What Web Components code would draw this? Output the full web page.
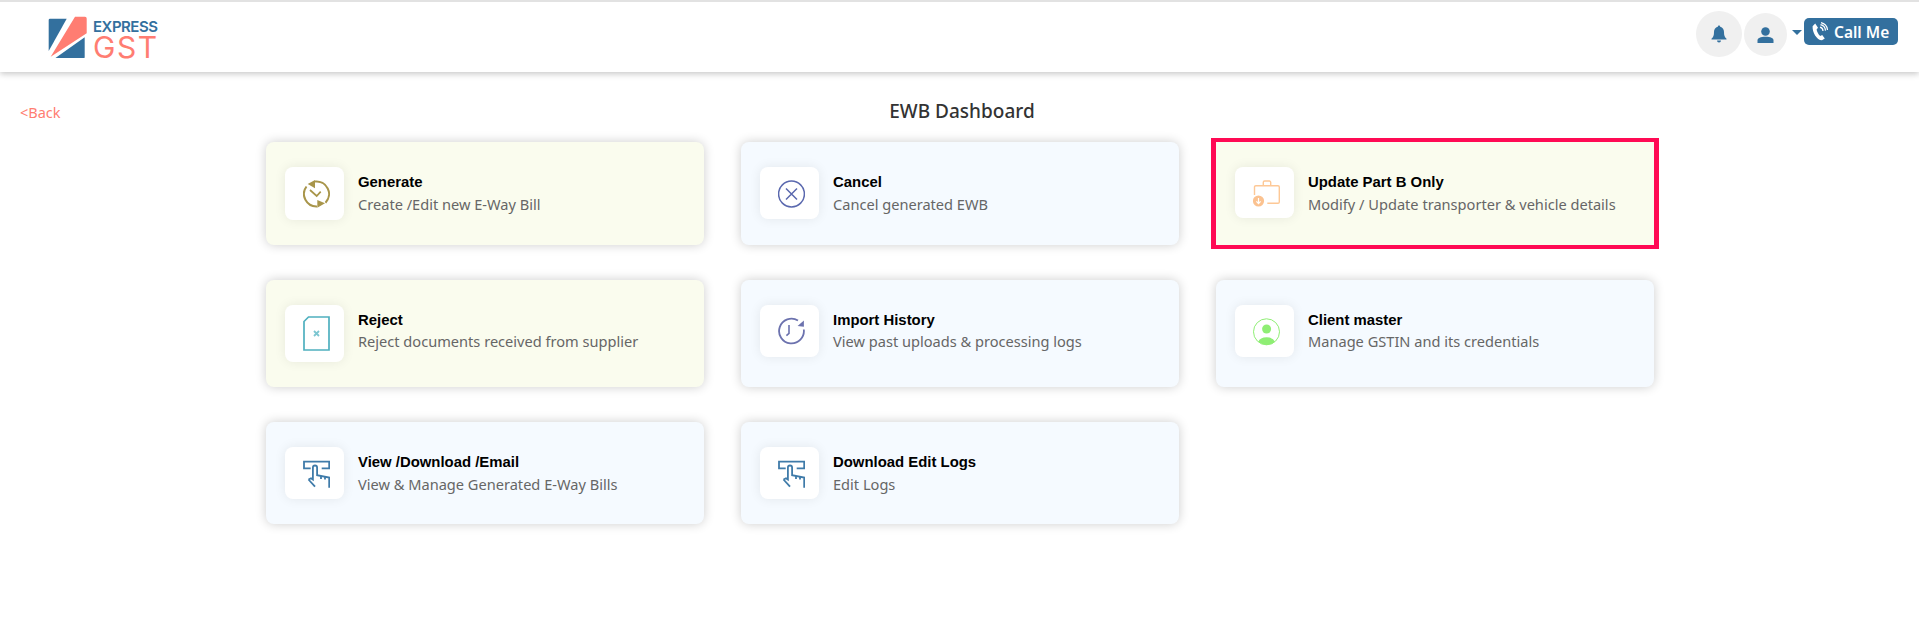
<!DOCTYPE html>
<html>
<head>
<meta charset="utf-8">
<title>EWB Dashboard</title>
<style>
    html, body { margin: 0; padding: 0; min-height: 634px; background: #fff; font-family: "Noto Sans", sans-serif; }
</style>
</head>
<body>
<app-header></app-header>
<ewb-dashboard>
    <span slot="heading">EWB Dashboard</span>

    <ewb-card tone="green">
        <svg slot="icon" width="27" height="31" viewBox="0 0 27 31" fill="none" stroke="#a8954a" stroke-width="2">
            <path d="M12 3.6A12.5 12.5 0 0 1 22.5 24.7"/>
            <path d="M3.5 8.5A12.5 12.5 0 0 0 14 28.5"/>
            <path d="M4.7 6L12 2V10.3Z" fill="#a8954a" stroke="none"/>
            <path d="M22 25.3L14.3 22V29.7Z" fill="#a8954a" stroke="none"/>
            <path d="M7 12L13.7 18L17.7 13.7" stroke-width="1.7"/>
        </svg>
        <span slot="title">Generate</span>
        Create /Edit new E-Way Bill
    </ewb-card>

    <ewb-card tone="blue">
        <svg slot="icon" width="27" height="30" viewBox="0 0 27 30" fill="none" stroke="#5a68ae" stroke-width="1.5">
            <circle cx="13.5" cy="16" r="12.9"/>
            <path d="M8 10.5L19 21.5M19 10.5L8 21.5"/>
        </svg>
        <span slot="title">Cancel</span>
        Cancel generated EWB
    </ewb-card>

    <ewb-card tone="green" highlight>
        <svg slot="icon" width="27" height="29" viewBox="0 0 27 29" fill="none" stroke="#fdc896" stroke-width="1.4">
            <path d="M1.5 17V9A1.3 1.3 0 0 1 2.8 7.7H25A1.3 1.3 0 0 1 26.3 9V24A1.3 1.3 0 0 1 25 25.3H14.3"/>
            <path d="M10.3 7.7V4.3A1.3 1.3 0 0 1 11.6 3H16.4A1.3 1.3 0 0 1 17.7 4.3V7.7"/>
            <circle cx="5.5" cy="23" r="5.6" fill="#fbc290" stroke="none"/>
            <path d="M5.5 20V25M3.4 23.4L5.5 25.6L7.6 23.4" stroke="#fff" stroke-width="1.2"/>
        </svg>
        <span slot="title">Update Part B Only</span>
        Modify / Update transporter &amp; vehicle details
    </ewb-card>

    <ewb-card tone="green" tight>
        <svg slot="icon" width="27" height="35" viewBox="0 0 27 35" fill="none" stroke="#4fb0bf" stroke-width="1.7">
            <path d="M5.5 1H26V34H1V5.5Z"/>
            <path d="M11 15L16 20M16 15L11 20" stroke="#7cc6d1" stroke-width="1.8"/>
        </svg>
        <span slot="title">Reject</span>
        Reject documents received from supplier
    </ewb-card>

    <ewb-card tone="blue" tight>
        <svg slot="icon" width="27" height="30" viewBox="0 0 27 30" fill="none" stroke="#6c72ae" stroke-width="1.8">
            <path d="M20 4.5A12.4 12.4 0 1 0 25.8 13.5"/>
            <path d="M25.9 4.4V10.8L19.6 10Z" fill="#6c72ae" stroke="none"/>
            <path d="M11 9V17.3L8.4 19.7" stroke-width="1.6"/>
        </svg>
        <span slot="title">Import History</span>
        View past uploads &amp; processing logs
    </ewb-card>

    <ewb-card tone="blue" tight>
        <svg slot="icon" width="27" height="30" viewBox="0 0 27 30" fill="none" stroke="#8fee74" stroke-width="1">
            <circle cx="13.5" cy="15.8" r="13"/>
            <circle cx="13.6" cy="13" r="4.5" fill="#8fee74" stroke="none"/>
            <path d="M5.2 25.8A8.8 6.5 0 0 1 22 25.8A13 13 0 0 1 5.2 25.8Z" fill="#8fee74" stroke="none"/>
        </svg>
        <span slot="title">Client master</span>
        Manage GSTIN and its credentials
    </ewb-card>

    <ewb-card tone="blue">
        <svg slot="icon" width="27" height="30" viewBox="0 0 27 30" fill="none" stroke="#3f7ba9" stroke-width="1.8">
            <path d="M7.7 10.3H1V3.7H26.2V10.3H18.7"/>
            <path d="M5.5 21.5L8 20.3L9.9 21.6V9.6A2.1 2.1 0 0 1 14.1 9.6V17.2L26.2 19.6V29.8"/>
            <path d="M5.5 21.5L12 28.6"/>
            <path d="M18 18V21M22 18.7V21.5"/>
        </svg>
        <span slot="title">View /Download /Email</span>
        View &amp; Manage Generated E-Way Bills
    </ewb-card>

    <ewb-card tone="blue">
        <svg slot="icon" width="27" height="30" viewBox="0 0 27 30" fill="none" stroke="#3f7ba9" stroke-width="1.8">
            <path d="M7.7 10.3H1V3.7H26.2V10.3H18.7"/>
            <path d="M5.5 21.5L8 20.3L9.9 21.6V9.6A2.1 2.1 0 0 1 14.1 9.6V17.2L26.2 19.6V29.8"/>
            <path d="M5.5 21.5L12 28.6"/>
            <path d="M18 18V21M22 18.7V21.5"/>
        </svg>
        <span slot="title">Download Edit Logs</span>
        Edit Logs
    </ewb-card>
</ewb-dashboard>

<script>
class AppHeader extends HTMLElement {
    constructor() {
        super();
        this.attachShadow({mode: 'open'});
    }

    connectedCallback() {
        this.shadowRoot.innerHTML = `
            <style>
                :host { display: block; height: 70px; border-top: 2px solid #e2e2e2; box-shadow: 0 2px 6px rgba(0,0,0,0.22); background: #fff; }
                #bar { height: 100%; display: flex; align-items: flex-start; justify-content: space-between; padding: 0 21px 0 48px; }
                #logo { display: flex; gap: 5px; padding-top: 14px; }
                #words { display: flex; flex-direction: column; font-family: Inter, sans-serif; line-height: 1; }
                #express { color: #33709e; font-size: 15px; font-weight: 600; letter-spacing: -0.5px; margin-top: 3px; height: 15px; }
                #gst { color: #ff7d72; font-size: 30px; font-weight: 400; letter-spacing: 1.6px; height: 26px; line-height: 26px; }
                #tools { display: flex; align-items: flex-start; }
                .round { display: flex; align-items: center; justify-content: center; border-radius: 50%; background: #f0f0f0; }
                #bell { width: 46px; height: 46px; margin-top: 9px; margin-right: 2px; }
                #user { width: 43px; height: 43px; margin-top: 11px; }
                #caret { width: 0; height: 0; border: 5px solid transparent; border-top-color: #33709e; border-bottom-width: 0; margin: 28px 2px 0 5px; }
                #call { display: flex; align-items: center; gap: 6px; height: 27px; width: 94px; box-sizing: border-box; padding-left: 8px; margin-top: 16px; background: #33709e; border-radius: 5px; color: #fff; font: 600 15.5px "Noto Sans", sans-serif; }
            </style>
            <div id="bar">
                <div id="logo">
                    <svg width="40" height="42" viewBox="48 16 40 42">
                        <path d="M50 18.7H66.7L48.7 51V20A1.3 1.3 0 0 1 50 18.7Z" fill="#33709e"/>
                        <path d="M84.7 37.3V57A1.3 1.3 0 0 1 83.4 58.3H55Z" fill="#33709e"/>
                        <path d="M75 16.7H85A1.7 1.7 0 0 1 86.7 18.4V33.3L50.7 56.7Z" fill="#ff7d72"/>
                    </svg>
                    <div id="words"><span id="express">EXPRESS</span><span id="gst">GST</span></div>
                </div>
                <div id="tools">
                    <div id="bell" class="round">
                        <svg width="16" height="18" viewBox="0 0 16 18" fill="#33709e">
                            <path d="M8 0.5A1.2 1.2 0 0 1 9.2 1.8C11.8 2.4 13 4.5 13 7C13 10.5 13.6 12 15.5 13.8V14.5H0.5V13.8C2.4 12 3 10.5 3 7C3 4.5 4.2 2.4 6.8 1.8A1.2 1.2 0 0 1 8 0.5Z"/>
                            <path d="M6 15.5H10A2 2 0 0 1 6 15.5Z"/>
                        </svg>
                    </div>
                    <div id="user" class="round">
                        <svg width="17" height="16" viewBox="0 0 17 16" fill="#33709e">
                            <circle cx="8.5" cy="4.5" r="4.3"/>
                            <path d="M0.5 16V13.5C0.5 11 3.5 9.8 8.5 9.8S16.5 11 16.5 13.5V16Z"/>
                        </svg>
                    </div>
                    <div id="caret"></div>
                    <div id="call">
                        <svg width="16" height="19" viewBox="0 0 16 19" fill="none" stroke="#fff">
                            <path d="M3.2 1.5L6 5.8L4.6 7.6C5 10 6.4 12.6 8.2 14L10.2 13L12.8 16.4L10 18.2C4.6 18.2 0.2 10 0.6 4.2Z" fill="#fff" stroke="none"/>
                            <path d="M8 5.2A4 4 0 0 1 11 9M8.5 2.6A6.5 6.5 0 0 1 13.5 8.6M9 0.6A8.5 8.5 0 0 1 15.5 8" stroke-width="1.2"/>
                        </svg>
                        <slot>Call Me</slot>
                    </div>
                </div>
            </div>
        `;
    }
}

class EwbDashboard extends HTMLElement {
    constructor() {
        super();
        this.attachShadow({mode: 'open'});
    }

    connectedCallback() {
        this.shadowRoot.innerHTML = `
            <style>
                :host { display: block; padding-bottom: 40px; }
                #top { display: grid; grid-template-columns: 1fr auto 1fr; align-items: center; height: 26px; margin: 26px 0 18px; }
                #back { padding: 2px 0 0 20px; color: #ff7d72; font-size: 14.5px; }
                #title { padding-left: 5px; color: #333; font-size: 19px; font-weight: 500; }
                #cards { display: grid; grid-template-columns: repeat(3, 438px); column-gap: 37px; row-gap: 35px; margin-left: 266px; align-items: stretch; }
            </style>
            <div id="top">
                <div id="back">&lt;Back</div>
                <div id="title"><slot name="heading"></slot></div>
                <div></div>
            </div>
            <div id="cards"><slot></slot></div>
        `;
    }
}

class EwbCard extends HTMLElement {
    constructor() {
        super();
        this.attachShadow({mode: 'open'});
    }

    connectedCallback() {
        this.shadowRoot.innerHTML = `
            <style>
                :host { display: flex; position: relative; gap: 14px; align-items: flex-start; padding: 25px 19px; border-radius: 8px; box-shadow: 0 0 11px rgba(0,0,0,0.2); background: #f5faff; }
                :host([tone="green"]) { background: #fafcee; }
                :host([highlight]) { border-radius: 0; box-shadow: none; }
                :host([highlight])::after { content: ""; position: absolute; inset: -4px -5px; border: solid #ff0a54; border-width: 4px 5px; pointer-events: none; }
                #tile { display: flex; padding: 11px 14px 11px 18px; border-radius: 8px; background: #fff; box-shadow: 0 0 12px rgba(0,0,0,0.08); }
                #text { padding-top: 6px; }
                #title { color: #000; font: bold 14.9px/18px "Liberation Sans", Arial, sans-serif; margin-bottom: 4px; }
                :host([tight]) #title { margin-bottom: 3px; }
                #desc { color: #666; font-size: 14.6px; line-height: 19px; }
            </style>
            <div id="tile"><slot name="icon"></slot></div>
            <div id="text">
                <div id="title"><slot name="title"></slot></div>
                <div id="desc"><slot></slot></div>
            </div>
        `;
    }
}

customElements.define('app-header', AppHeader);
customElements.define('ewb-dashboard', EwbDashboard);
customElements.define('ewb-card', EwbCard);
</script>
</body>
</html>
